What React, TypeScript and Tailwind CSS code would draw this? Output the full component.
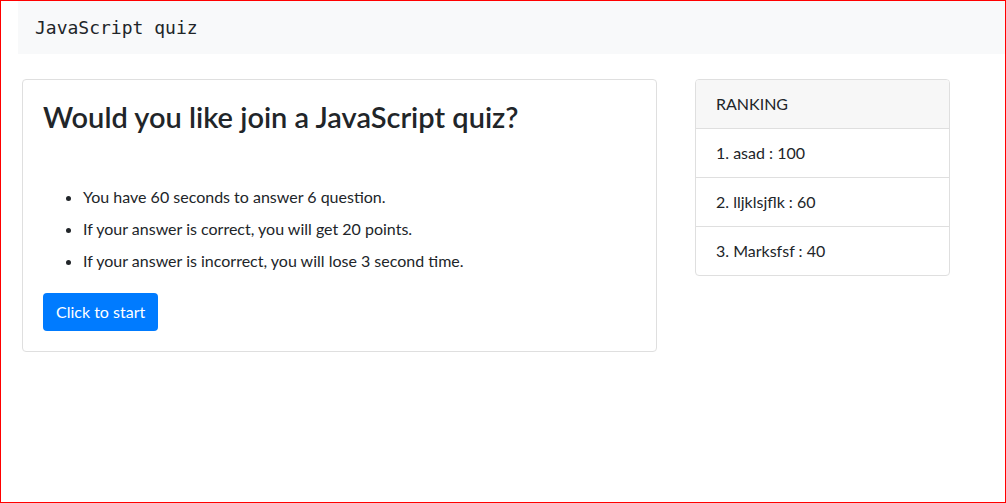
import React from 'react';

const rules = [
  'You have 60 seconds to answer 6 question.',
  'If your answer is correct, you will get 20 points.',
  'If your answer is incorrect, you will lose 3 second time.',
];

const ranking = ['1. asad : 100', '2. lljklsjflk : 60', '3. Marksfsf : 40'];

export default function App() {
  return (
    <div className="h-[503px] border border-[#ff0000] bg-white text-[#212529] font-['Lato',sans-serif]">
      {/* Navbar */}
      <nav className="ml-[17px] h-[53px] bg-[#f8f9fa] flex items-center pl-[17px]">
        <span className="font-['DejaVu_Sans_Mono',monospace] text-[18px] leading-none">JavaScript quiz</span>
      </nav>

      <div className="flex items-start pl-[21px] mt-[25px]">
        {/* Quiz card */}
        <div className="w-[635px] border border-[#dfdfdf] rounded p-5">
          <h3 className="text-[29px] leading-[1.2] font-semibold mb-[50px]">Would you like join a JavaScript quiz?</h3>
          <ul className="list-disc pl-10 text-[16px] leading-6">
            {rules.map((r) => (
              <li key={r} className="mb-2">{r}</li>
            ))}
          </ul>
          <button className="mt-3 bg-[#007bff] text-white text-[16px] leading-6 px-[13px] py-[7px] rounded">Click to start</button>
        </div>

        {/* Ranking */}
        <div className="ml-[38px] w-[255px] border border-[#dfdfdf] rounded overflow-hidden text-[16px] leading-6">
          <div className="bg-[#f7f7f7] px-5 py-3 border-b border-[#dfdfdf]">RANKING</div>
          {ranking.map((r, i) => (
            <div key={r} className={`px-5 py-3 ${i < ranking.length - 1 ? 'border-b border-[#dfdfdf]' : ''}`}>{r}</div>
          ))}
        </div>
      </div>
    </div>
  );
}
